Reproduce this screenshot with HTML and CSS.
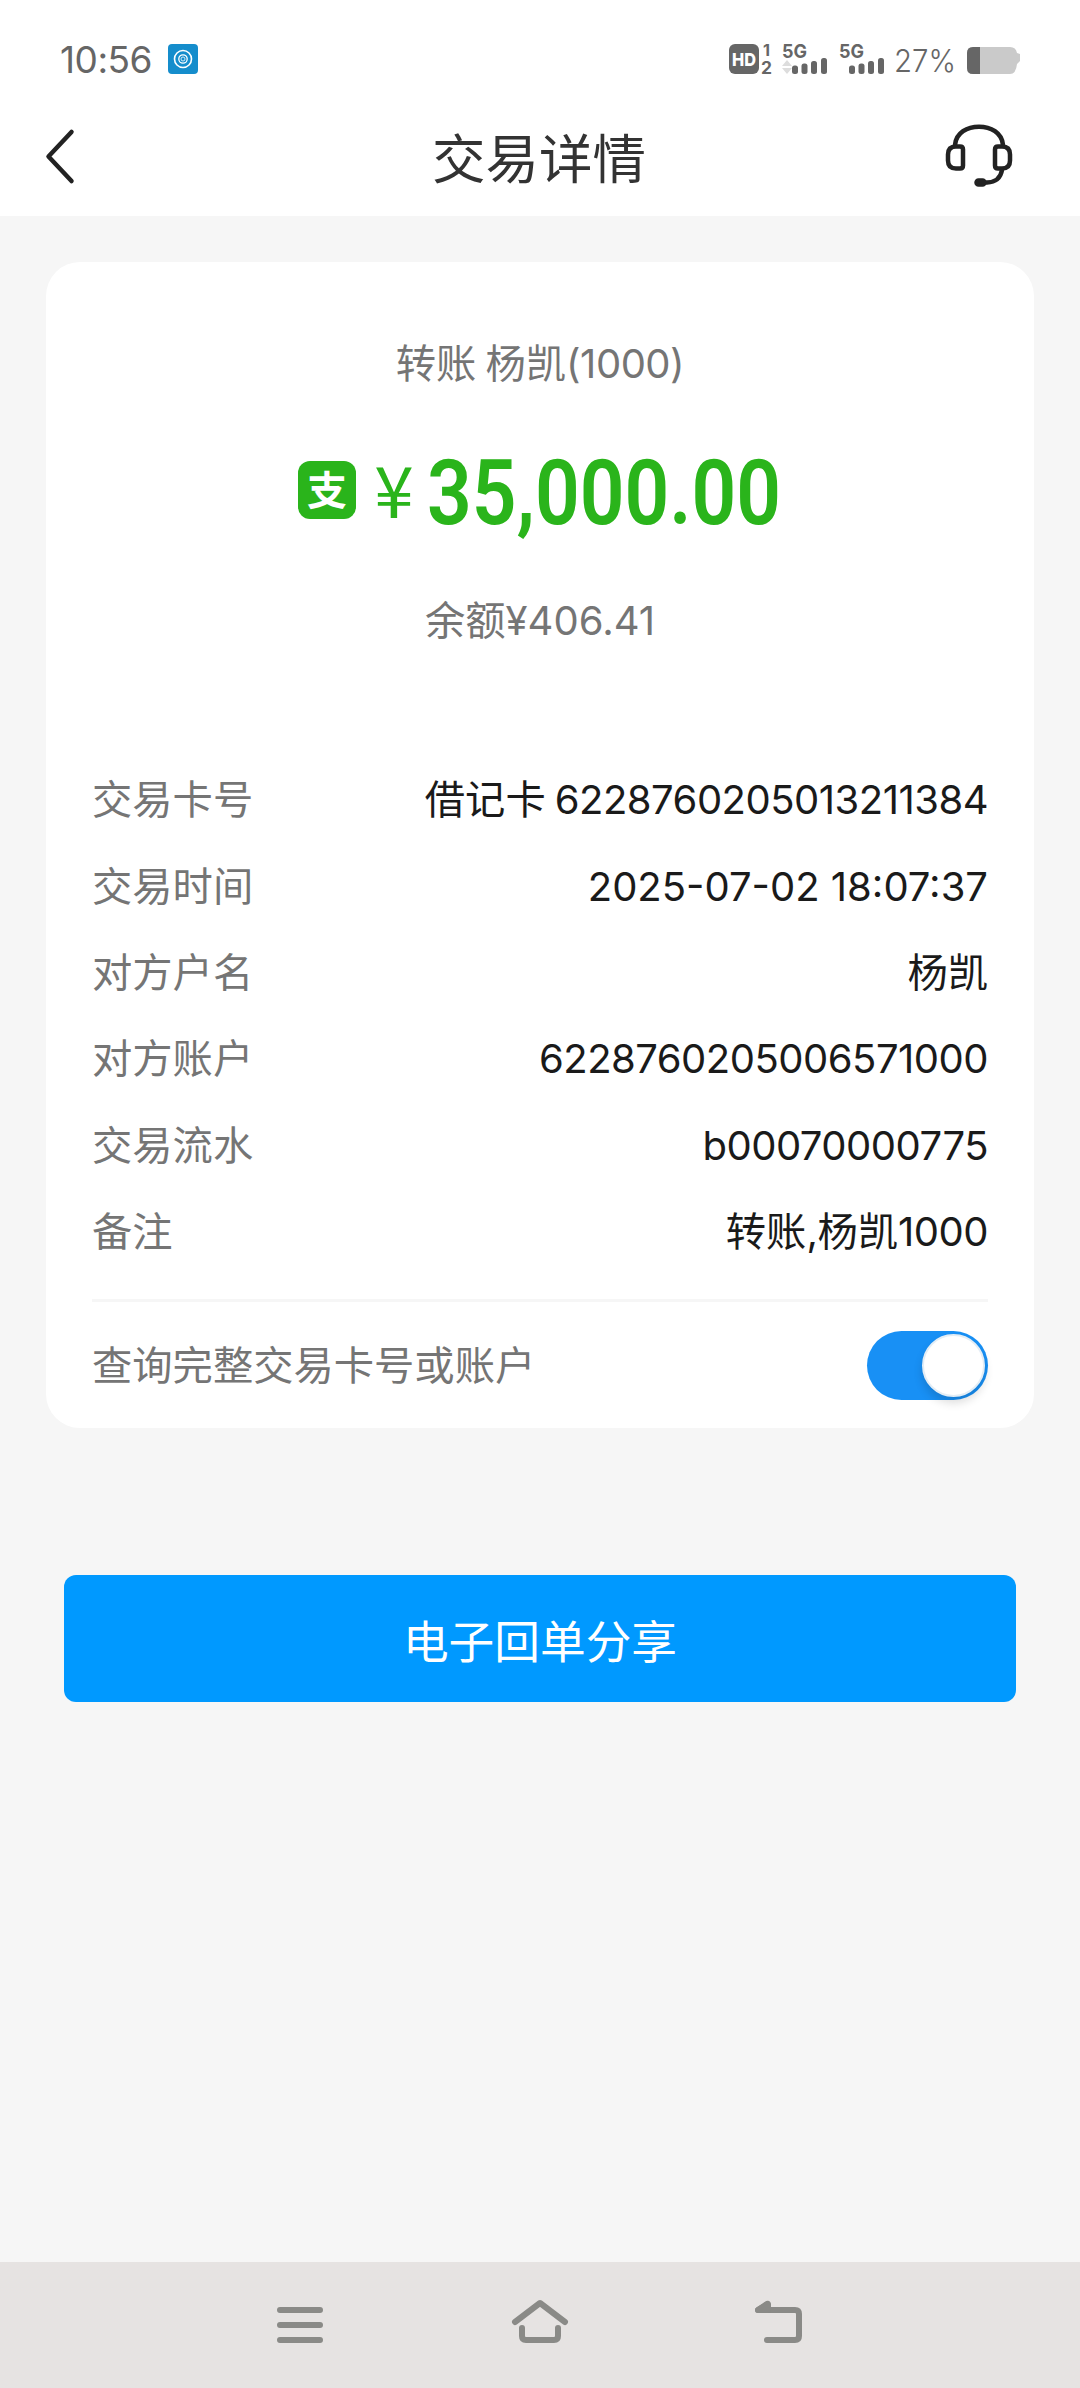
FILE: index.html
```html
<!DOCTYPE html>
<html lang="zh-CN">
  <head>
    <meta charset="UTF-8" />
    <meta name="viewport" content="width=device-width, initial-scale=1.0" />
    <title>交易详情</title>
    <link rel="stylesheet" href="styles.css">
  </head>
  <body>
    <div class="status-bar">
      <span class="time">10:56</span>
      <svg class="app-icon" viewBox="0 0 30 30">
        <rect width="30" height="30" rx="4" fill="#158dcc" />
        <g fill="none" stroke="#fff">
          <circle cx="15" cy="15" r="8.5" stroke-width="1.6" />
          <circle cx="15" cy="15" r="4.2" stroke-width="1.3" />
          <circle cx="15" cy="15" r="2" stroke-width="0.8" />
        </g>
      </svg>
      <svg class="status-icons" viewBox="0 0 292 32" fill="#666">
        <rect x="0" y="0" width="30" height="30" rx="6" />
        <text x="3" y="21.5" font-size="18" font-weight="800" fill="#fff" textLength="24" lengthAdjust="spacingAndGlyphs">HD</text>
        <text x="34" y="12" font-size="16" font-weight="700" textLength="7" lengthAdjust="spacingAndGlyphs">1</text>
        <text x="32" y="30" font-size="17" font-weight="700" textLength="11" lengthAdjust="spacingAndGlyphs">2</text>

        <text x="53" y="14" font-size="19" font-weight="700" textLength="25" lengthAdjust="spacingAndGlyphs">5G</text>
        <path d="M58 16l5 6H53zM58 30l5-6H53z" fill="#ddd" />
        <rect x="63" y="21.5" width="6" height="8.5" rx="2.5" />
        <rect x="72.5" y="19.5" width="6" height="10.5" rx="2.5" />
        <rect x="82" y="17" width="6" height="13" rx="2.5" />
        <rect x="92" y="14" width="6" height="16" rx="2.5" />

        <text x="110" y="14" font-size="19" font-weight="700" textLength="25" lengthAdjust="spacingAndGlyphs">5G</text>
        <rect x="120" y="21.5" width="6" height="8.5" rx="2.5" />
        <rect x="129.5" y="19.5" width="6" height="10.5" rx="2.5" />
        <rect x="139" y="17" width="6" height="13" rx="2.5" />
        <rect x="149" y="14" width="6" height="16" rx="2.5" />

        <text x="165" y="27.5" font-size="31" font-weight="300" textLength="62" lengthAdjust="spacingAndGlyphs">27%</text>

        <path d="M244 3h37q6 0 7 6l3 1v7l-3 3q-1 10-7 10h-37q-6 0-6-6V9q0-6 6-6z" fill="#cacaca" />
        <path d="M251 3h-7q-6 0-6 6v15q0 6 6 6h7z" />
      </svg>
    </div>

    <header class="header">
      <svg class="back" viewBox="0 0 30 56">
        <path d="M26.500 4L3.500 28.500L26.500 53" fill="none" stroke="#222" stroke-width="4.500" stroke-linecap="round" stroke-linejoin="round" />
      </svg>
      <h1>交易详情</h1>
      <svg class="service" viewBox="0 0 68 64" fill="none" stroke="#222" stroke-width="4.500" stroke-linecap="round">
        <path d="M10 21C12 -3.500 56 -3.500 58 21" />
        <path d="M11 22.500h4q3 0 3 3v16q0 3-3 3h-4q-8 0-8-8v-6q0-8 8-8z" />
        <path d="M57 22.500h-4q-3 0-3 3v16q0 3 3 3h4q8 0 8-8v-6q0-8-8-8z" />
        <path d="M57 46q-2 12-15 12.500h-4" />
        <rect x="31.500" y="56.500" width="8" height="4" rx="2" fill="#222" />
      </svg>
    </header>

    <main>
      <section class="card">
        <p class="summary">转账 杨凯<span class="num">(1000)</span></p>
        <div class="amount">
          <span class="badge">支</span>
          <span class="yen">¥</span>
          <svg class="money" viewBox="0 0 354 90">
            <text x="0" y="78" textLength="354" lengthAdjust="spacingAndGlyphs">35,000.00</text>
          </svg>
        </div>
        <p class="balance">余额<span class="num wide">¥406.41</span></p>

        <dl class="details">
          <div class="row">
            <dt>交易卡号</dt>
            <dd>借记卡 <span class="num">6228760205013211384</span></dd>
          </div>
          <div class="row">
            <dt>交易时间</dt>
            <dd><span class="num wide">2025-07-02 18:07:37</span></dd>
          </div>
          <div class="row">
            <dt>对方户名</dt>
            <dd>杨凯</dd>
          </div>
          <div class="row">
            <dt>对方账户</dt>
            <dd><span class="num">6228760205006571000</span></dd>
          </div>
          <div class="row">
            <dt>交易流水</dt>
            <dd><span class="num">b00070000775</span></dd>
          </div>
          <div class="row">
            <dt>备注</dt>
            <dd>转账<span class="num">,</span>杨凯<span class="num">1000</span></dd>
          </div>
        </dl>

        <div class="query">
          <span class="query-label">查询完整交易卡号或账户</span>
          <span class="switch"><span class="knob"></span></span>
        </div>
      </section>

      <button class="share">电子回单分享</button>
    </main>

    <nav class="system-nav">
      <svg viewBox="0 0 60 48">
        <path d="M10 9h40M10 24h40M10 39h40" />
      </svg>
      <svg viewBox="0 0 60 48">
        <path d="M5 21L30 2L55 21M12 27v8q0 4 4 4h28q4 0 4-4v-8" />
      </svg>
      <svg viewBox="0 0 60 48">
        <path d="M17 39h28q4 0 4-4V13q0-4-4-4H8L17 3" />
        <path d="M8 9L18 3v6z" />
      </svg>
    </nav>
  </body>
</html>
```
FILE: styles.css
```css
*,
*::before,
*::after {
  box-sizing: border-box;
  margin: 0;
  padding: 0;
}
body {
  width: 1080px;
  height: 2388px;
  display: flex;
  flex-direction: column;
  background-color: #f6f6f6;
  font-family: "Noto Sans CJK SC", sans-serif;
  font-size: 40.3px;
  color: #1a1a1a;
}
svg {
  display: block;
  flex-shrink: 0;
  overflow: visible;
}

.status-bar {
  display: flex;
  align-items: flex-start;
  height: 100px;
  padding: 44px 59px 0 60px;
  background-color: #fff;
  font-family: Inter, sans-serif;
}
.time {
  width: 108px;
  line-height: 32px;
  font-size: 37px;
  letter-spacing: -0.5px;
  color: #666;
}
.app-icon {
  width: 30px;
  height: 30px;
}
.status-icons {
  width: 292px;
  height: 32px;
  margin-left: auto;
}

.header {
  display: flex;
  align-items: center;
  justify-content: space-between;
  height: 116px;
  padding: 0 67px 4px 45px;
  background-color: #fff;
}
.back {
  width: 30px;
  height: 56px;
  margin-right: 58px;
}
.service {
  width: 68px;
  height: 64px;
}
h1 {
  font-size: 53.5px;
  font-weight: 400;
  line-height: 80px;
  color: #333;
}

main {
  flex: 1;
  padding: 46px 46px 0;
}
.card {
  height: 1166px;
  padding: 0 46px;
  border-radius: 34px;
  background-color: #fff;
}
.num {
  font-family: Inter, sans-serif;
  font-size: 40px;
  line-height: 1;
  letter-spacing: -0.5px;
}
.num.wide {
  letter-spacing: 0;
}
.summary,
.balance {
  line-height: 60px;
  text-align: center;
  color: #757575;
}
.summary {
  padding-top: 69px;
}
.amount {
  display: flex;
  align-items: center;
  height: 90px;
  margin: 55px 0 52px 206px;
  color: #2ab41b;
}
.badge {
  width: 58px;
  height: 58px;
  margin-bottom: 2px;
  border-radius: 12px;
  background-color: #2ab41b;
  color: #fff;
  font-size: 40px;
  font-weight: 700;
  line-height: 55px;
  text-align: center;
}
.yen {
  width: 44px;
  margin-left: 16px;
  margin-bottom: 8px;
  font-size: 71px;
  line-height: 90px;
  text-align: center;
}
.money {
  width: 354px;
  height: 90px;
  margin-left: 11px;
  fill: #2ab41b;
  font-family: Roboto, sans-serif;
  font-size: 91px;
  font-weight: 600;
}

.details {
  margin-top: 106px;
}
.row {
  display: flex;
  justify-content: space-between;
  align-items: center;
  height: 86.4px;
  line-height: 60px;
}
dt {
  color: #757575;
}

.query {
  display: flex;
  justify-content: space-between;
  align-items: center;
  height: 129px;
  margin-top: 27px;
  border-top: 3px solid #f6f6f6;
  color: #757575;
}
.query-label {
  padding-bottom: 5px;
}
.switch {
  display: flex;
  justify-content: flex-end;
  width: 121px;
  height: 69px;
  padding: 3px;
  border-radius: 35px;
  background-color: #1890f5;
}
.knob {
  width: 63px;
  height: 63px;
  border: 2px solid #e3edf5;
  border-radius: 50%;
  background-color: #fff;
  box-shadow: 0 6px 10px rgba(0, 0, 0, 0.14);
}

.share {
  display: block;
  width: 952px;
  height: 127px;
  margin: 147px auto 0;
  border: 0;
  border-radius: 12px;
  background-color: #0099ff;
  color: #fff;
  font-family: inherit;
  font-size: 45.7px;
}

.system-nav {
  display: flex;
  justify-content: center;
  gap: 180px;
  height: 126px;
  padding-top: 39px;
  background-color: #e6e3e2;
}
.system-nav svg {
  width: 60px;
  height: 48px;
  fill: none;
  stroke: #8a8a87;
  stroke-width: 6;
  stroke-linecap: round;
  stroke-linejoin: round;
}
```
